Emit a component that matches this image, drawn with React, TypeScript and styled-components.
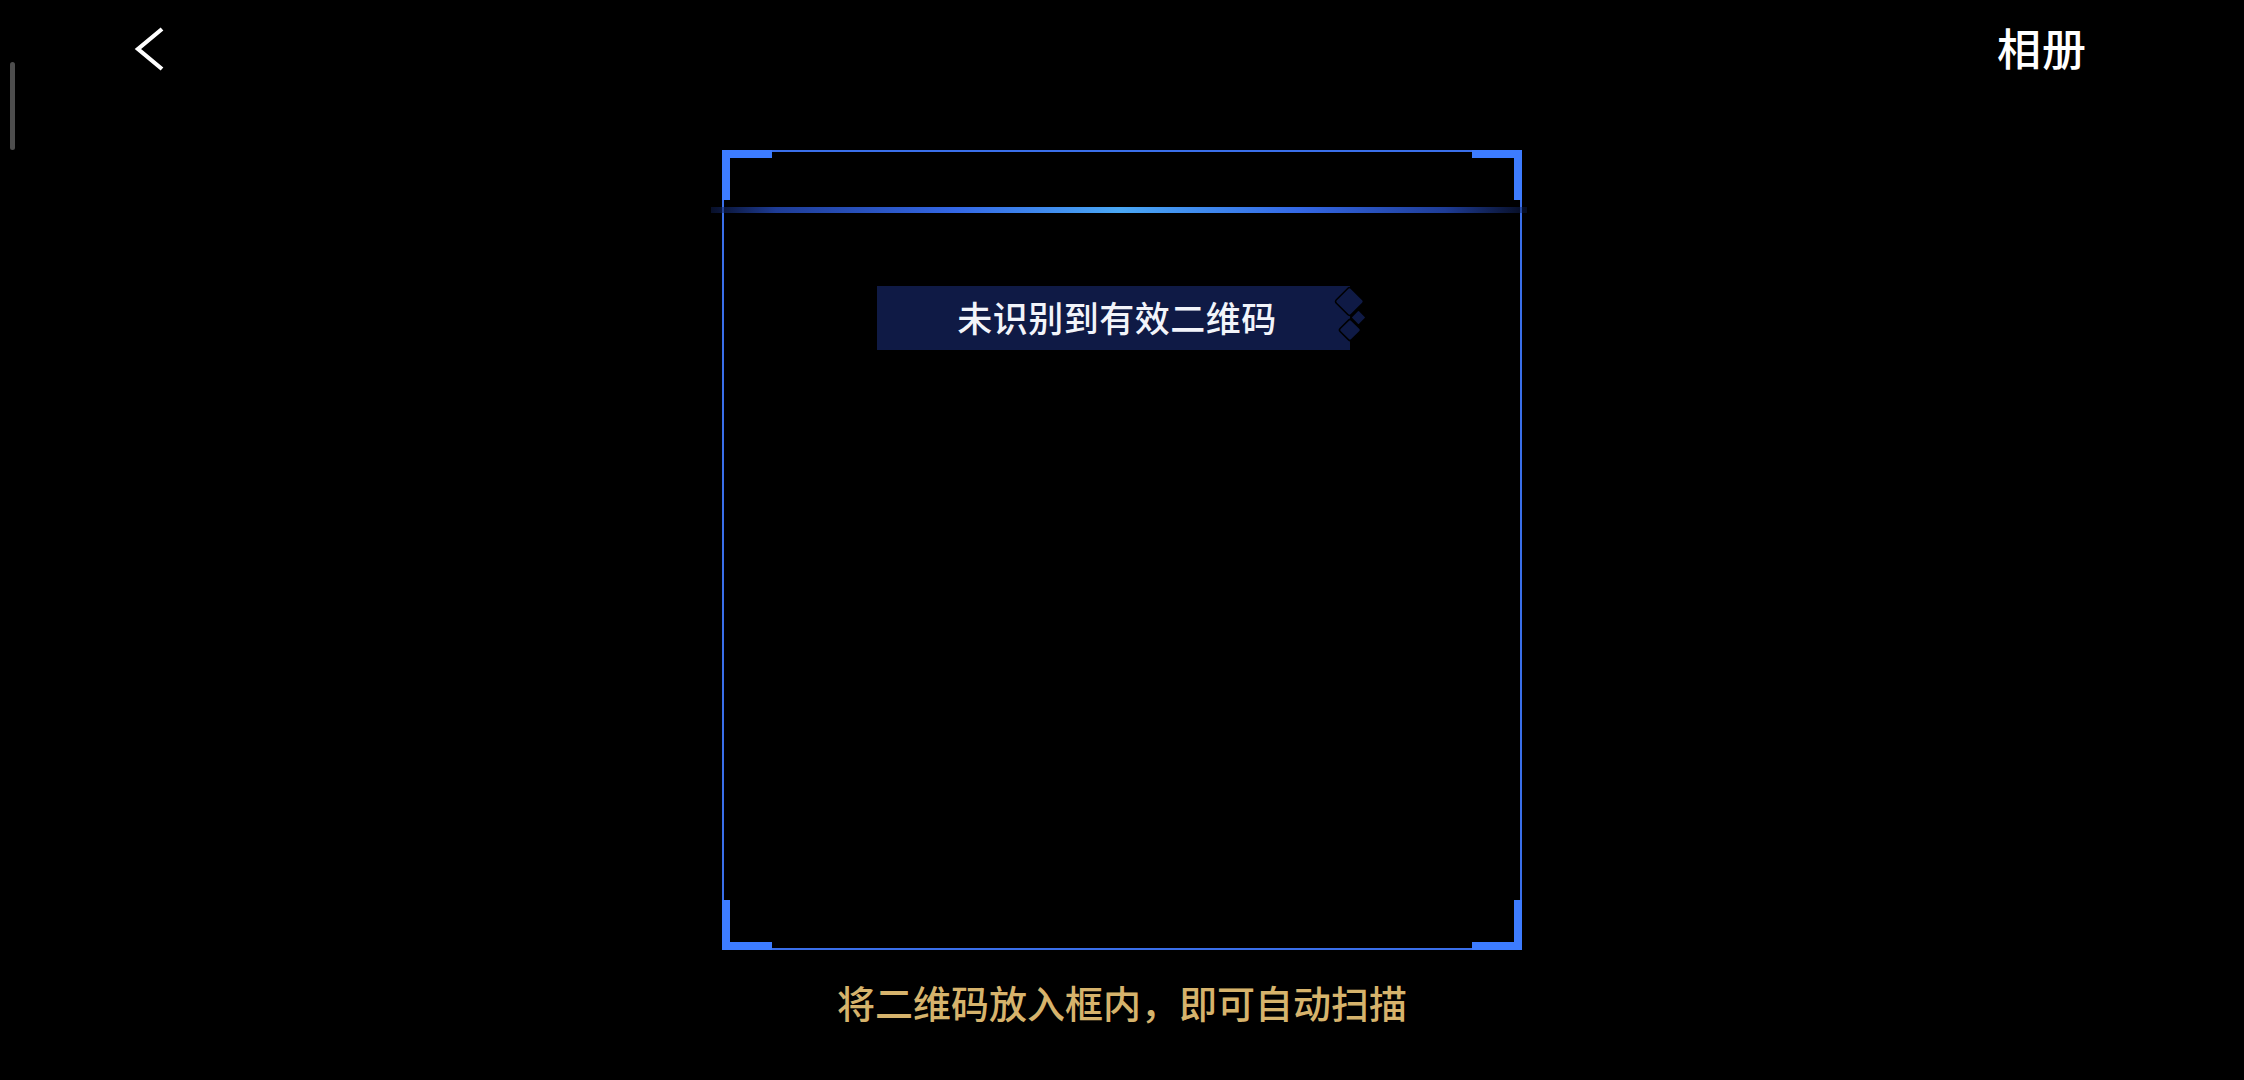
import React from "react";
import styled, { createGlobalStyle } from "styled-components";

const GlobalStyle = createGlobalStyle`
  html, body {
    margin: 0;
    padding: 0;
    background: #000;
  }
  body {
    font-family: "Noto Sans CJK SC", "Noto Sans", sans-serif;
    color: #fff;
  }
`;

const Page = styled.div`
  position: relative;
  width: 100vw;
  height: 100vh;
  background: #000;
  display: flex;
  flex-direction: column;
  align-items: center;
  overflow: hidden;
`;

const ScrollIndicator = styled.div`
  position: absolute;
  left: 10px;
  top: 62px;
  width: 5px;
  height: 88px;
  border-radius: 3px;
  background: #4d4d4d;
`;

const TopBar = styled.header`
  width: 100%;
  height: 100px;
  box-sizing: border-box;
  padding: 0 157px 0 134px;
  display: flex;
  align-items: center;
  justify-content: space-between;
`;

const BackButton = styled.button`
  background: none;
  border: none;
  padding: 0;
  width: 32px;
  height: 46px;
  display: flex;
  align-items: center;
  cursor: pointer;
`;

const AlbumLink = styled.span`
  font-size: 44px;
  font-weight: 500;
  line-height: 1;
  color: #fff;
  letter-spacing: 1px;
  margin-top: -6px;
`;

const ScanFrame = styled.div`
  position: relative;
  margin-top: 50px;
  width: 800px;
  height: 800px;
  box-sizing: border-box;
  border: 2px solid #3a6fea;
  display: flex;
  flex-direction: column;
  align-items: center;
`;

const Corner = styled.div<{ $v: "top" | "bottom"; $h: "left" | "right" }>`
  position: absolute;
  width: 50px;
  height: 50px;
  box-sizing: border-box;
  ${(p) => p.$v}: -2px;
  ${(p) => p.$h}: -2px;
  border-${(p) => p.$v}: 8px solid #3d7cff;
  border-${(p) => p.$h}: 8px solid #3d7cff;
`;

const ScanLine = styled.div`
  position: absolute;
  left: -13px;
  right: -7px;
  top: 55px;
  height: 6px;
  background: linear-gradient(
    90deg,
    rgba(15, 30, 80, 0.5) 0%,
    #1e3c96 8%,
    #3468e6 30%,
    #4aa8f5 50%,
    #3468e6 72%,
    #1e3c96 90%,
    rgba(15, 30, 80, 0.4) 100%
  );
`;

const Notice = styled.div`
  margin-top: 134px;
  margin-left: -2px;
  display: flex;
  align-items: center;
`;

const NoticeBox = styled.div`
  width: 473px;
  height: 64px;
  background: #0f1a45;
  display: flex;
  align-items: center;
  justify-content: center;
  padding: 0 0 4px 8px;
  box-sizing: border-box;
  font-size: 35px;
  font-weight: 500;
  color: #f2f4fa;
  letter-spacing: 0.5px;
`;

const Diamonds = styled.svg`
  width: 34px;
  height: 64px;
  margin-left: -18px;
`;

const Hint = styled.p`
  margin: 28px 0 0;
  font-size: 38px;
  font-weight: 500;
  line-height: 48px;
  color: #d6b36c;
`;

export default function App() {
  return (
    <>
      <GlobalStyle />
      <Page>
        <ScrollIndicator />
        <TopBar>
          <BackButton aria-label="返回">
            <svg width="32" height="46" viewBox="0 0 32 46">
              <polyline
                points="28,2 4,22 28,42"
                fill="none"
                stroke="#fff"
                strokeWidth="4.2"
              />
            </svg>
          </BackButton>
          <AlbumLink>相册</AlbumLink>
        </TopBar>
        <ScanFrame>
          <Corner $v="top" $h="left" />
          <Corner $v="top" $h="right" />
          <Corner $v="bottom" $h="left" />
          <Corner $v="bottom" $h="right" />
          <ScanLine />
          <Notice>
            <NoticeBox>未识别到有效二维码</NoticeBox>
            <Diamonds viewBox="0 0 34 64">
              <g fill="#0f1a45" stroke="#000" strokeWidth="1.5" strokeLinejoin="round">
                <rect x="7" y="5" width="21" height="21" rx="2.5" transform="rotate(45 17.5 15.5)" />
                <rect x="21" y="26" width="11" height="11" rx="1.5" transform="rotate(45 26.5 31.5)" />
                <rect x="10" y="36" width="16" height="16" rx="2" transform="rotate(45 18 44)" />
              </g>
            </Diamonds>
          </Notice>
        </ScanFrame>
        <Hint>将二维码放入框内，即可自动扫描</Hint>
      </Page>
    </>
  );
}
